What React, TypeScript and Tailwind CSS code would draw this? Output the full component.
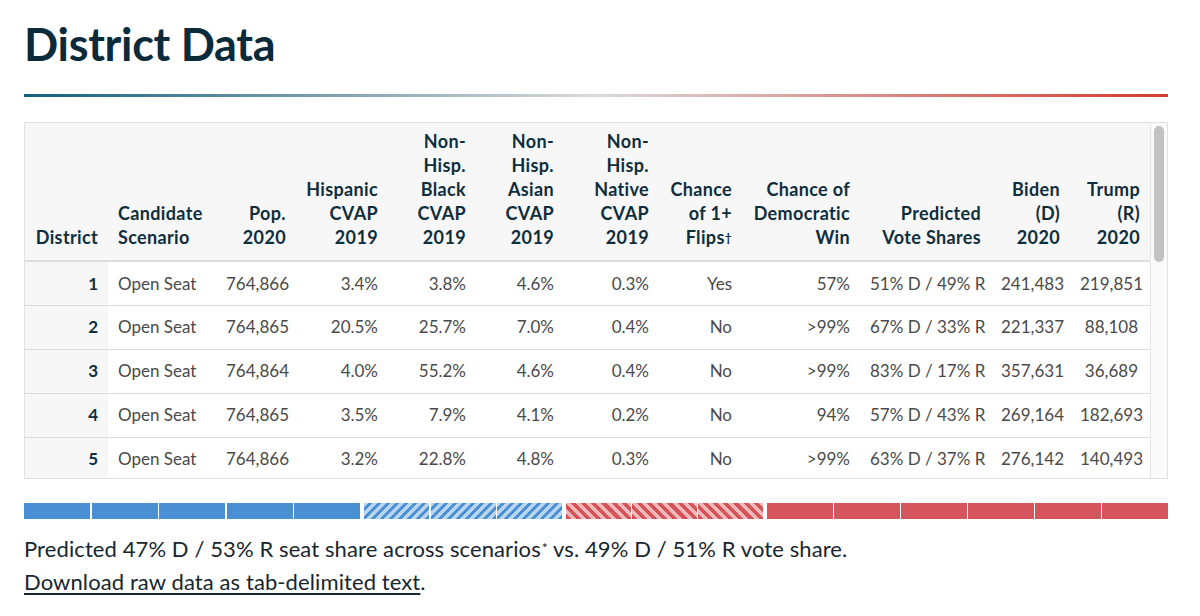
const rows = [
  { d: 1, scen: "Open Seat", pop: "764,866", hisp: "3.4%", black: "3.8%", asian: "4.6%", native: "0.3%", flips: "Yes", win: "57%", share: "51% D / 49% R", biden: "241,483", trump: "219,851" },
  { d: 2, scen: "Open Seat", pop: "764,865", hisp: "20.5%", black: "25.7%", asian: "7.0%", native: "0.4%", flips: "No", win: ">99%", share: "67% D / 33% R", biden: "221,337", trump: "88,108" },
  { d: 3, scen: "Open Seat", pop: "764,864", hisp: "4.0%", black: "55.2%", asian: "4.6%", native: "0.4%", flips: "No", win: ">99%", share: "83% D / 17% R", biden: "357,631", trump: "36,689" },
  { d: 4, scen: "Open Seat", pop: "764,865", hisp: "3.5%", black: "7.9%", asian: "4.1%", native: "0.2%", flips: "No", win: "94%", share: "57% D / 43% R", biden: "269,164", trump: "182,693" },
  { d: 5, scen: "Open Seat", pop: "764,866", hisp: "3.2%", black: "22.8%", asian: "4.8%", native: "0.3%", flips: "No", win: ">99%", share: "63% D / 37% R", biden: "276,142", trump: "140,493" },
  { d: 6, scen: "Open Seat", pop: "764,865", hisp: "5.1%", black: "4.2%", asian: "3.9%", native: "0.3%", flips: "No", win: "12%", share: "44% D / 56% R", biden: "198,215", trump: "251,930" },
]

const widths = ["w-[83px]", "w-[108px]", "w-[80px]", "w-[92px]", "w-[88px]", "w-[88px]", "w-[95px]", "w-[83px]", "w-[118px]", "w-[131px]", "w-[79px]", "w-[80px]"]

const heads = [
  ["District"],
  ["Candidate", "Scenario"],
  ["Pop.", "2020"],
  ["Hispanic", "CVAP", "2019"],
  ["Non-", "Hisp.", "Black", "CVAP", "2019"],
  ["Non-", "Hisp.", "Asian", "CVAP", "2019"],
  ["Non-", "Hisp.", "Native", "CVAP", "2019"],
  ["Chance", "of 1+", "Flips†"],
  ["Chance of", "Democratic", "Win"],
  ["Predicted", "Vote Shares"],
  ["Biden", "(D)", "2020"],
  ["Trump", "(R)", "2020"],
]

const solidBlue = "bg-[#4a8ed4]"
const hatchBlue = "bg-[repeating-linear-gradient(-45deg,#4a8ed4_0_3.2px,#b8d4ef_3.2px_6.4px)]"
const hatchRed = "bg-[repeating-linear-gradient(45deg,#d4545a_0_3.6px,#f3b8ba_3.6px_7.2px)]"
const solidRed = "bg-[#d4555b]"

function Seg({ cls }: { cls: string }) {
  return <div className={`flex-1 h-full ${cls}`} />
}

export default function App() {
  return (
    <div className="bg-white w-[1200px] h-[616px] px-[24px] pt-[18px] font-['Lato',sans-serif] text-[#0d2c3b]">
      <h1 className="text-[45px] leading-[52px] font-bold tracking-[-0.3px] text-[#0b2a3a]">District Data</h1>
      <div className="mt-[24px] h-[3px] w-[1144px] bg-[linear-gradient(to_right,#13607f,#dadada_50%,#d63a2f)]" />

      {/* table box */}
      <div className="mt-[25px] w-[1144px] border border-[#e2e2e2] flex">
        <div className="w-[1125px] h-[355px] overflow-hidden">
          <table className="table-fixed border-collapse w-[1125px]">
            <colgroup>
              {widths.map((w, i) => (
                <col key={i} className={w} />
              ))}
            </colgroup>
            <thead>
              <tr className="bg-[#f7f7f7] border-b-2 border-[#dedede]">
                {heads.map((h, i) => (
                  <th
                    key={i}
                    className={`align-bottom px-[10px] pt-[6px] pb-[11px] text-[18px] leading-[24px] font-bold tracking-[0.35px] text-[#0f2e3d] ${i === 1 ? "text-left" : "text-right"}`}
                  >
                    {h.map((line, j) => (
                      <div key={j} className="whitespace-nowrap">
                        {line.endsWith("†") ? (
                          <>
                            {line.slice(0, -1)}
                            <sup className="text-[12px] relative -top-[2px]">†</sup>
                          </>
                        ) : (
                          line
                        )}
                      </div>
                    ))}
                  </th>
                ))}
              </tr>
            </thead>
            <tbody className="text-[17px] text-[#4a4a4a]">
              {rows.map((r) => (
                <tr key={r.d} className="h-[44px] border-b border-[#dcdcdc]">
                  <td className="bg-[#f7f7f7] px-[10px] text-right font-bold text-[#0f2e3d]">{r.d}</td>
                  <td className="px-[10px] text-left whitespace-nowrap">{r.scen}</td>
                  <td className="pl-[10px] pr-[12px] text-right">{r.pop}</td>
                  <td className="px-[10px] text-right">{r.hisp}</td>
                  <td className="px-[10px] text-right">{r.black}</td>
                  <td className="px-[10px] text-right">{r.asian}</td>
                  <td className="px-[10px] text-right">{r.native}</td>
                  <td className="px-[10px] text-right">{r.flips}</td>
                  <td className="px-[10px] text-right">{r.win}</td>
                  <td className="px-[10px] text-right whitespace-nowrap">{r.share}</td>
                  <td className="pl-[10px] pr-[12px] text-right">{r.biden}</td>
                  <td className="pl-[10px] pr-[12px] text-right">{r.trump}</td>
                </tr>
              ))}
            </tbody>
          </table>
        </div>
        {/* scrollbar */}
        <div className="flex-1 border-l border-[#e6e6e6] bg-[#fafafa] px-[3px] pt-[3px]">
          <div className="h-[136px] rounded-full bg-[#c2c2c2]" />
        </div>
      </div>

      {/* seat bar */}
      <div className="mt-[24px] w-[1144px] h-[16px] flex gap-[4px]">
        <div className="flex gap-[1.5px] h-full w-[336px]">
          {[0, 1, 2, 3, 4].map((i) => (
            <Seg key={i} cls={solidBlue} />
          ))}
        </div>
        <div className="flex gap-[1.5px] h-full w-[198px]">
          {[0, 1, 2].map((i) => (
            <Seg key={i} cls={hatchBlue} />
          ))}
        </div>
        <div className="flex gap-[1.5px] h-full w-[197px]">
          {[0, 1, 2].map((i) => (
            <Seg key={i} cls={hatchRed} />
          ))}
        </div>
        <div className="flex gap-[1.5px] h-full flex-1">
          {[0, 1, 2, 3, 4, 5].map((i) => (
            <Seg key={i} cls={solidRed} />
          ))}
        </div>
      </div>

      <p className="mt-[14px] text-[22px] leading-[32px] tracking-[0.1px] text-[#18262e]">
        Predicted 47% D / 53% R seat share across scenarios<sup className="text-[14px] relative -top-[4px] ml-[1px]">*</sup> vs. 49% D / 51% R vote share.
      </p>
      <p className="mt-[1px] text-[22px] leading-[32px] tracking-[0.1px] text-[#18262e]">
        <a href="#" className="underline underline-offset-[3px] decoration-[1.5px]">Download raw data as tab-delimited text</a>.
      </p>
    </div>
  )
}
